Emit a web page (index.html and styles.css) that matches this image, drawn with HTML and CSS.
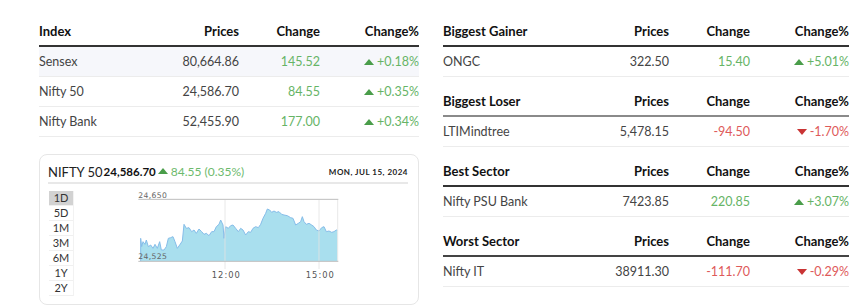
FILE: index.html
```html
<!DOCTYPE html>
<html>
<head>
<meta charset="utf-8">
<link rel="stylesheet" href="styles.css">
</head>
<body>
<div class="page">
  <div class="col left">
    <div class="tbl">
      <div class="row head dark"><span>Index</span><span class="r">Prices</span><span class="r">Change</span><span class="r">Change%</span></div>
      <div class="row hl"><span>Sensex</span><span class="r">80,664.86</span><span class="r up-t">145.52</span><span class="r pct up-t"><i class="tri up"></i>+0.18%</span></div>
      <div class="row"><span>Nifty 50</span><span class="r">24,586.70</span><span class="r up-t">84.55</span><span class="r pct up-t"><i class="tri up"></i>+0.35%</span></div>
      <div class="row"><span>Nifty Bank</span><span class="r">52,455.90</span><span class="r up-t">177.00</span><span class="r pct up-t"><i class="tri up"></i>+0.34%</span></div>
    </div>
    <div class="card">
      <div class="card-head">
        <div class="quote"><span class="name">NIFTY 50</span><span class="val">24,586.70</span><i class="tri up big"></i><span class="chg">84.55 (0.35%)</span></div>
        <div class="date">MON, JUL 15, 2024</div>
      </div>
      <div class="card-body">
        <ul class="periods">
          <li class="active">1D</li><li>5D</li><li>1M</li><li>3M</li><li>6M</li><li>1Y</li><li>2Y</li>
        </ul>
        <svg class="chart" width="220" height="95" viewBox="0 18 660 285">
          <polygon class="area" points="35,160 38,185 42,170 48,178 52,165 58,185 65,180 72,190 78,178 85,190 92,170 97,195 105,195 112,185 118,160 125,158 132,155 138,170 145,190 152,180 160,168 165,118 172,130 180,128 188,140 195,135 202,145 210,132 218,140 225,148 232,145 240,152 248,140 255,140 262,125 270,118 275,105 282,120 285,160 290,125 298,130 305,122 312,120 320,130 328,140 335,130 342,135 350,150 358,140 365,142 372,130 380,125 388,128 395,118 402,100 410,85 415,72 422,75 428,82 435,78 442,82 450,80 458,88 465,90 475,92 485,98 492,100 500,120 508,115 515,110 520,95 525,110 532,118 540,115 548,120 555,125 562,135 570,138 578,128 585,125 592,140 600,138 608,142 615,140 622,135 625,136 625,228 35,228"/>
          <polyline class="line" points="35,228 35,160 38,185 42,170 48,178 52,165 58,185 65,180 72,190 78,178 85,190 92,170 97,195 105,195 112,185 118,160 125,158 132,155 138,170 145,190 152,180 160,168 165,118 172,130 180,128 188,140 195,135 202,145 210,132 218,140 225,148 232,145 240,152 248,140 255,140 262,125 270,118 275,105 282,120 285,160 290,125 298,130 305,122 312,120 320,130 328,140 335,130 342,135 350,150 358,140 365,142 372,130 380,125 388,128 395,118 402,100 410,85 415,72 422,75 428,82 435,78 442,82 450,80 458,88 465,90 475,92 485,98 492,100 500,120 508,115 515,110 520,95 525,110 532,118 540,115 548,120 555,125 562,135 570,138 578,128 585,125 592,140 600,138 608,142 615,140 622,135 625,136"/>
          <line class="grid" x1="288" y1="45" x2="288" y2="252"/>
          <line class="grid" x1="570" y1="45" x2="570" y2="252"/>
          <line class="grid" x1="626" y1="45" x2="626" y2="228"/>
          <line class="axis" x1="28" y1="43" x2="628" y2="43"/>
          <line class="axis" x1="28" y1="229" x2="628" y2="229"/>
          <text class="ylab" x="28" y="38">24,650</text>
          <text class="ylab" x="28" y="222">24,525</text>
          <text class="xlab" x="292" y="280" text-anchor="middle">12:00</text>
          <text class="xlab" x="574" y="280" text-anchor="middle">15:00</text>
        </svg>
      </div>
    </div>
  </div>
  <div class="col right">
    <div class="tbl">
      <div class="row head dark"><span>Biggest Gainer</span><span class="r">Prices</span><span class="r">Change</span><span class="r">Change%</span></div>
      <div class="row"><span>ONGC</span><span class="r">322.50</span><span class="r up-t">15.40</span><span class="r pct up-t"><i class="tri up"></i>+5.01%</span></div>
    </div>
    <div class="tbl gap">
      <div class="row head grey"><span>Biggest Loser</span><span class="r">Prices</span><span class="r">Change</span><span class="r">Change%</span></div>
      <div class="row"><span>LTIMindtree</span><span class="r">5,478.15</span><span class="r dn-t">-94.50</span><span class="r pct dn-t"><i class="tri dn"></i>-1.70%</span></div>
    </div>
    <div class="tbl gap">
      <div class="row head dark"><span>Best Sector</span><span class="r">Prices</span><span class="r">Change</span><span class="r">Change%</span></div>
      <div class="row"><span>Nifty PSU Bank</span><span class="r">7423.85</span><span class="r up-t">220.85</span><span class="r pct up-t"><i class="tri up"></i>+3.07%</span></div>
    </div>
    <div class="tbl gap">
      <div class="row head mid"><span>Worst Sector</span><span class="r">Prices</span><span class="r">Change</span><span class="r">Change%</span></div>
      <div class="row"><span>Nifty IT</span><span class="r">38911.30</span><span class="r dn-t">-111.70</span><span class="r pct dn-t"><i class="tri dn"></i>-0.29%</span></div>
    </div>
  </div>
</div>
</body>
</html>
```
FILE: styles.css
```css
* { box-sizing: border-box; }
html, body { margin: 0; padding: 0; background: #fff; }
body { font-family: "Lato", "Open Sans", sans-serif; color: #444; }

.page {
  display: flex;
  gap: 24px;
  padding: 15px 0 0 39px;
}
.col.left { width: 380px; }
.col.right { width: 406px; }

.row {
  display: grid;
  grid-template-columns: 1fr 80px 81px 99px;
  align-items: center;
  height: 30px;
  font-size: 12.5px;
  border-bottom: 1px solid #ececec;
}
.row span { white-space: nowrap; }
.row .r { text-align: right; }
.row.head {
  height: 32px;
  font-size: 13px;
  font-weight: 700;
  color: #111;
  border-bottom: 2px solid #333;
  padding-top: 2px;
}
.row.head.grey { border-bottom-color: #8a8a8a; }
.row.head.mid { border-bottom-color: #444; }
.row.hl { background: #f6f7fb; }
.tbl.gap { margin-top: 8px; }

.up-t { color: #66b466; }
.dn-t { color: #de5a5a; }

.pct {
  display: flex;
  justify-content: flex-end;
  align-items: center;
  gap: 3px;
}
.tri {
  display: inline-block;
  width: 0;
  height: 0;
  border-left: 5px solid transparent;
  border-right: 5px solid transparent;
}
.tri.up { border-bottom: 6px solid #4a9d4a; }
.tri.dn { border-top: 6px solid #c93434; }

.card {
  margin-top: 17px;
  border: 1px solid #e6e6e6;
  border-radius: 8px;
  padding: 8px 10px 8px 8px;
}
.card-head {
  height: 21px;
  display: flex;
  align-items: center;
  justify-content: space-between;
  border-bottom: 2px solid #e8e8e8;
  padding-bottom: 2px;
}
.quote { display: flex; align-items: center; white-space: nowrap; }
.quote .name { font-size: 13px; color: #222; }
.quote .val { font-size: 11.5px; font-weight: 700; color: #111; margin-left: 1px; }
.tri.big { margin: 0 3px 1px 2px; }
.quote .chg { font-size: 12px; color: #6dba6d; }
.date {
  font-size: 8px;
  font-weight: 700;
  letter-spacing: 0.5px;
  color: #222;
}

.card-body {
  display: flex;
  align-items: flex-start;
  margin-top: 7px;
}
.periods {
  list-style: none;
  margin: 0 0 0 1px;
  padding: 0;
  width: 25px;
  border-right: 1px solid #f2f2f2;
}
.periods li {
  height: 15px;
  line-height: 14px;
  text-align: center;
  font-size: 11px;
  color: #333;
  border-bottom: 1px solid #f0f0f0;
}
.periods li.active { background: #d2d2d2; }
.chart { display: block; margin-left: 55px; }
.chart .area { fill: #a9dfee; stroke: none; }
.chart .line { fill: none; stroke: #86bde9; stroke-width: 3; stroke-linejoin: round; }
.chart .grid { stroke: #e4e4e4; stroke-width: 3; opacity: 0.8; }
.chart .axis { stroke: #bdbdbd; stroke-width: 3; }
.chart .ylab { font-family: "DejaVu Sans", sans-serif; font-size: 23px; letter-spacing: 1px; fill: #666; }
.chart .xlab { font-family: "DejaVu Sans", sans-serif; font-size: 25px; letter-spacing: 3px; fill: #555; }
```
